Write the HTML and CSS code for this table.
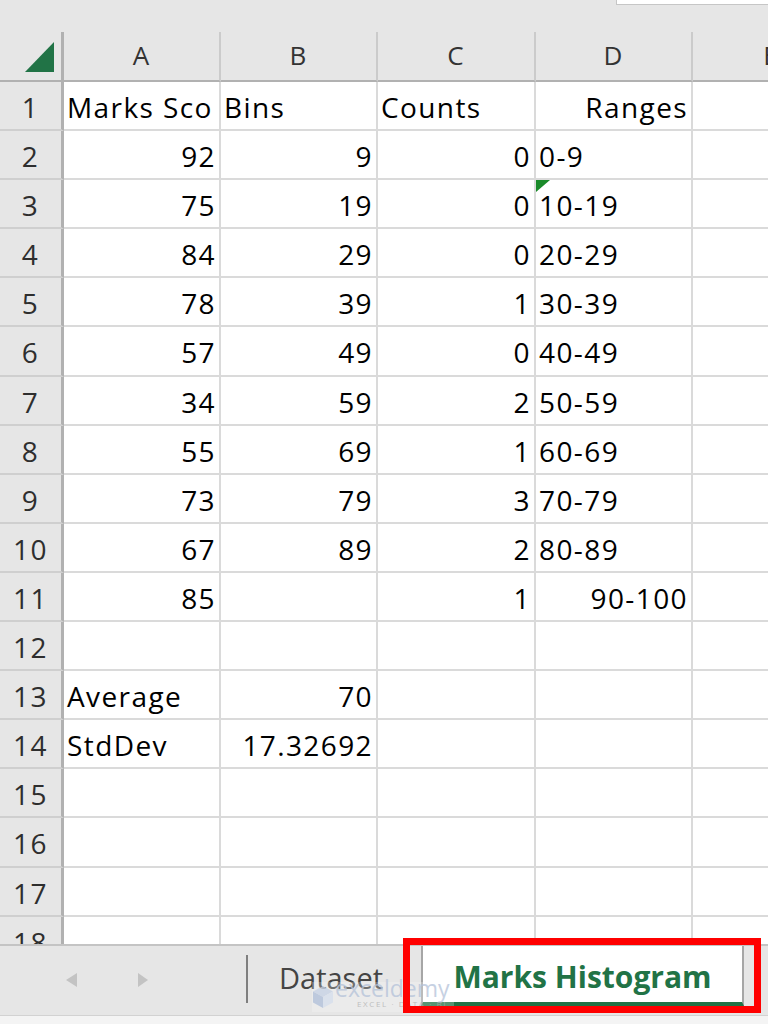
FILE: index.html
```html
<!DOCTYPE html>
<html lang="en">
<head>
<meta charset="utf-8">
<title>Marks Histogram</title>
<link rel="stylesheet" href="styles.css">
</head>
<body>
<div class="app">
  <div class="topband"><div class="namebox"></div></div>

  <div class="sheet">
    <div class="corner"><svg class="corner-mark" width="61" height="48" viewBox="0 0 61 48"><polygon points="54,10 54,40 25,40" fill="#217346"/></svg></div>
    <div class="colhead">A</div><div class="colhead">B</div><div class="colhead">C</div><div class="colhead">D</div><div class="colhead">E</div>

    <div class="rowhead">1</div><div class="cell">Marks Sco</div><div class="cell">Bins</div><div class="cell">Counts</div><div class="cell num">Ranges</div><div class="cell"></div>
    <div class="rowhead">2</div><div class="cell num">92</div><div class="cell num">9</div><div class="cell num">0</div><div class="cell">0-9</div><div class="cell"></div>
    <div class="rowhead">3</div><div class="cell num">75</div><div class="cell num">19</div><div class="cell num">0</div><div class="cell flag">10-19</div><div class="cell"></div>
    <div class="rowhead">4</div><div class="cell num">84</div><div class="cell num">29</div><div class="cell num">0</div><div class="cell">20-29</div><div class="cell"></div>
    <div class="rowhead">5</div><div class="cell num">78</div><div class="cell num">39</div><div class="cell num">1</div><div class="cell">30-39</div><div class="cell"></div>
    <div class="rowhead">6</div><div class="cell num">57</div><div class="cell num">49</div><div class="cell num">0</div><div class="cell">40-49</div><div class="cell"></div>
    <div class="rowhead">7</div><div class="cell num">34</div><div class="cell num">59</div><div class="cell num">2</div><div class="cell">50-59</div><div class="cell"></div>
    <div class="rowhead">8</div><div class="cell num">55</div><div class="cell num">69</div><div class="cell num">1</div><div class="cell">60-69</div><div class="cell"></div>
    <div class="rowhead">9</div><div class="cell num">73</div><div class="cell num">79</div><div class="cell num">3</div><div class="cell">70-79</div><div class="cell"></div>
    <div class="rowhead">10</div><div class="cell num">67</div><div class="cell num">89</div><div class="cell num">2</div><div class="cell">80-89</div><div class="cell"></div>
    <div class="rowhead">11</div><div class="cell num">85</div><div class="cell"></div><div class="cell num">1</div><div class="cell num">90-100</div><div class="cell"></div>
    <div class="rowhead">12</div><div class="cell"></div><div class="cell"></div><div class="cell"></div><div class="cell"></div><div class="cell"></div>
    <div class="rowhead">13</div><div class="cell">Average</div><div class="cell num">70</div><div class="cell"></div><div class="cell"></div><div class="cell"></div>
    <div class="rowhead">14</div><div class="cell">StdDev</div><div class="cell num">17.32692</div><div class="cell"></div><div class="cell"></div><div class="cell"></div>
    <div class="rowhead">15</div><div class="cell"></div><div class="cell"></div><div class="cell"></div><div class="cell"></div><div class="cell"></div>
    <div class="rowhead">16</div><div class="cell"></div><div class="cell"></div><div class="cell"></div><div class="cell"></div><div class="cell"></div>
    <div class="rowhead">17</div><div class="cell"></div><div class="cell"></div><div class="cell"></div><div class="cell"></div><div class="cell"></div>
    <div class="rowhead last">18</div><div class="cell last"></div><div class="cell last"></div><div class="cell last"></div><div class="cell last"></div><div class="cell last"></div>
  </div>

  <div class="tabbar">
    <div class="navs">
      <span class="arrow-left"></span>
      <span class="arrow-right"></span>
    </div>
    <div class="sep"></div>
    <div class="tab">Dataset</div>
    <div class="tab active">Marks Histogram</div>

    <div class="watermark">
      <svg width="22" height="24" viewBox="0 0 22 24">
        <polygon points="11,1 21,6.5 11,12 1,6.5" fill="#c9d4e6"/>
        <polygon points="1,6.5 11,12 11,23 1,17.5" fill="#b3c2dc"/>
        <polygon points="21,6.5 11,12 11,23 21,17.5" fill="#d8e0ee"/>
      </svg>
      <div class="wm-text">
        <span class="wm-name">exceldemy</span>
        <span class="wm-sub">EXCEL · DATA · BI</span>
      </div>
    </div>

    <div class="highlight"></div>
  </div>

  <div class="statusstrip"></div>
</div>
</body>
</html>
```

FILE: styles.css
```css
* {
  box-sizing: border-box;
}

body {
  margin: 0;
  background: #ffffff;
  font-family: "Open Sans", "Noto Sans", sans-serif;
}

.app {
  width: 768px;
  height: 1024px;
  overflow: hidden;
  display: flex;
  flex-direction: column;
}

/* top band (formula bar remnant) */
.topband {
  flex: none;
  height: 32px;
  background: #e6e6e6;
  display: flex;
  justify-content: flex-end;
}

.namebox {
  width: 152px;
  height: 5px;
  background: #ffffff;
  border-left: 1px solid #c6c6c6;
  border-bottom: 1px solid #c6c6c6;
}

/* worksheet grid */
.sheet {
  flex: none;
  width: 768px;
  overflow: hidden;
  display: grid;
  grid-template-columns: 64px 157px 157px 158px 157px 158px;
  grid-template-rows: 50px repeat(17, 49.1px) 27px;
  border-bottom: 2px solid #c4c4c4;
}

.corner {
  background: #e6e6e6;
  border-right: 3px solid #b1b1b1;
  border-bottom: 2px solid #b1b1b1;
}

.corner-mark {
  display: block;
}

.colhead {
  background: #e6e6e6;
  border-right: 2px solid #cbcbcb;
  border-bottom: 2px solid #b1b1b1;
  text-align: center;
  font-size: 26px;
  line-height: 46px;
  color: #333333;
  letter-spacing: 1px;
}

.rowhead {
  background: #e6e6e6;
  border-right: 3px solid #b1b1b1;
  border-bottom: 2px solid #cfcfcf;
  text-align: center;
  font-size: 28px;
  line-height: 47px;
  padding-top: 2px;
  color: #2e2e2e;
  letter-spacing: 1.4px;
  overflow: hidden;
}

.cell {
  border-right: 2px solid #dadada;
  border-bottom: 2px solid #dadada;
  font-size: 28px;
  line-height: 47px;
  padding: 2px 3px 0 3px;
  white-space: nowrap;
  overflow: hidden;
  color: #000000;
  letter-spacing: 1.4px;
}

.last {
  border-bottom: none;
}

.num {
  text-align: right;
}

.flag {
  position: relative;
}

.flag::before {
  content: "";
  position: absolute;
  left: 0;
  top: 0;
  width: 0;
  height: 0;
  border-top: 12px solid #1a8a2a;
  border-right: 14px solid transparent;
}

/* sheet tab bar */
.tabbar {
  flex: none;
  height: 69px;
  background: #e6e6e6;
  display: flex;
  position: relative;
}

.navs {
  width: 246px;
  display: flex;
  align-items: center;
  padding-left: 66px;
  gap: 61px;
}

.arrow-left {
  width: 0;
  height: 0;
  border-top: 7.5px solid transparent;
  border-bottom: 7.5px solid transparent;
  border-right: 11px solid #c3c3c3;
}

.arrow-right {
  width: 0;
  height: 0;
  border-top: 7.5px solid transparent;
  border-bottom: 7.5px solid transparent;
  border-left: 10px solid #c3c3c3;
}

.sep {
  width: 2px;
  height: 48px;
  margin-top: 9px;
  background: #7f7f7f;
}

.tab {
  width: 173px;
  height: 60px;
  padding-left: 31px;
  font-size: 29px;
  line-height: 64px;
  color: #444444;
  white-space: nowrap;
}

.tab.active {
  width: 323px;
  padding-left: 0;
  background: #ffffff;
  border-left: 2px solid #a6a6a6;
  border-right: 2px solid #a6a6a6;
  border-bottom: 4px solid #217346;
  text-align: center;
  font-size: 30px;
  font-weight: 700;
  line-height: 62px;
  color: #217346;
}

.watermark {
  position: absolute;
  left: 312px;
  top: 36px;
  width: 142px;
  height: 30px;
  display: flex;
  align-items: center;
  gap: 1px;
  background: rgba(255, 255, 255, 0.3);
  opacity: 0.8;
  white-space: nowrap;
}

.wm-text {
  display: flex;
  flex-direction: column;
  line-height: 1;
  flex: none;
}

.wm-name {
  font-size: 23px;
  color: #b9c6dc;
  margin-top: -8px;
}

.wm-sub {
  font-size: 8px;
  letter-spacing: 1.6px;
  color: #b4b4b4;
  padding-left: 22px;
}

.highlight {
  position: absolute;
  left: 403px;
  top: -8px;
  width: 358px;
  height: 75px;
  border: 7px solid #ff0000;
}

.statusstrip {
  flex: none;
  height: 9px;
  background: #f4f4f4;
  border-top: 1px solid #d2d2d2;
}
```
